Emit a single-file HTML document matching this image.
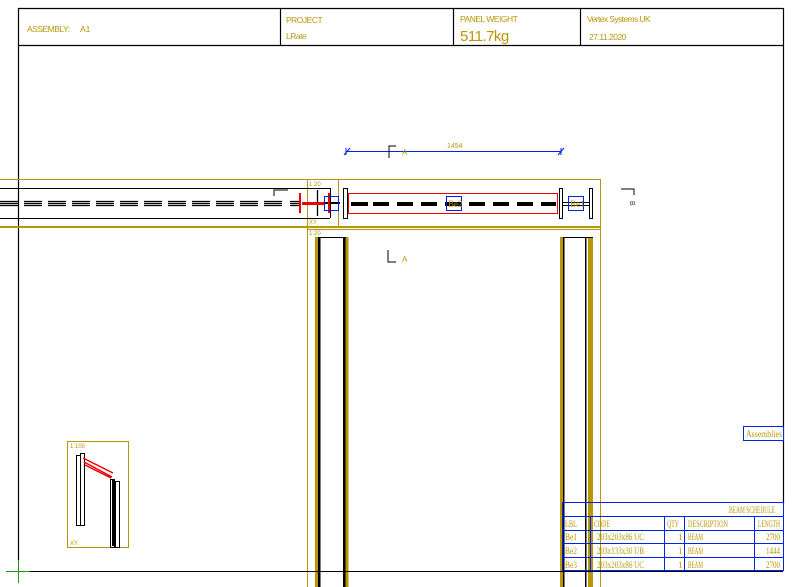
<!DOCTYPE html>
<html><head><meta charset="utf-8"><style>
html,body{margin:0;padding:0;background:#fff;width:799px;height:587px;overflow:hidden}
svg{display:block}
.t{font-family:"Liberation Sans",sans-serif;fill:#b8960a}
.m{font-family:"Liberation Serif",serif;fill:#b8960a;font-size:9px}
</style></head><body>
<svg width="799" height="587" viewBox="0 0 799 587" xmlns="http://www.w3.org/2000/svg">
<g stroke="#000" stroke-width="1.2" fill="none">
<line x1="18" y1="8.5" x2="783" y2="8.5"/>
<line x1="18" y1="45.5" x2="783" y2="45.5"/>
<line x1="18.5" y1="8" x2="18.5" y2="560"/>
<line x1="783.5" y1="8" x2="783.5" y2="503"/>
<line x1="280.5" y1="8" x2="280.5" y2="45"/>
<line x1="453.5" y1="8" x2="453.5" y2="45"/>
<line x1="580.5" y1="8" x2="580.5" y2="45"/>
</g>
<text class="t" x="27" y="32" font-size="8.5" letter-spacing="-0.5">ASSEMBLY:</text>
<text class="t" x="80" y="32" font-size="8.5">A1</text>
<text class="t" x="286" y="23" font-size="8.5" letter-spacing="-0.5">PROJECT</text>
<text class="t" x="286" y="39" font-size="8.5" letter-spacing="-0.5">LRate</text>
<text class="t" x="460" y="22" font-size="8.5" letter-spacing="-0.5">PANEL WEIGHT</text>
<text class="t" x="460" y="41" font-size="15" letter-spacing="-0.5">511.7kg</text>
<text class="t" x="587" y="22" font-size="8.5" letter-spacing="-0.6">Vertex Systems UK</text>
<text class="t" x="589" y="40" font-size="8.5" letter-spacing="-0.5">27.11.2020</text>

<g stroke="#b8960a" stroke-width="1" fill="none">
<line x1="0" y1="179.5" x2="600" y2="179.5"/>
<line x1="0" y1="227" x2="600" y2="227" stroke-width="2"/>
<line x1="307.5" y1="179" x2="307.5" y2="587"/>
<line x1="338.5" y1="179" x2="338.5" y2="227"/>
<line x1="600.5" y1="179" x2="600.5" y2="587"/>
<line x1="307" y1="229.5" x2="600" y2="229.5"/>
</g>
<g stroke="#000" stroke-width="1" fill="none">
<line x1="0" y1="188.5" x2="330" y2="188.5"/>
<line x1="0" y1="218.5" x2="330" y2="218.5"/>
<line x1="330.5" y1="188" x2="330.5" y2="218"/>
<polyline points="274,196 274,190 288,190"/>
</g>
<g stroke="#000" stroke-width="1.3">
<path d="M0 201.5H18M0 203.5H18M0 205.5H18" />
<path d="M24 201.5H42M24 203.5H42M24 205.5H42 M48 201.5H66M48 203.5H66M48 205.5H66 M72 201.5H90M72 203.5H90M72 205.5H90 M96 201.5H114M96 203.5H114M96 205.5H114 M120 201.5H138M120 203.5H138M120 205.5H138 M144 201.5H162M144 203.5H162M144 205.5H162 M168 201.5H186M168 203.5H186M168 205.5H186 M192 201.5H210M192 203.5H210M192 205.5H210 M216 201.5H234M216 203.5H234M216 205.5H234 M240 201.5H258M240 203.5H258M240 205.5H258 M264 201.5H282M264 203.5H282M264 205.5H282 M290 201.5H300M290 203.5H300M290 205.5H300"/>
<line x1="304" y1="203" x2="340" y2="203" stroke-width="2"/>
<line x1="317.5" y1="190" x2="317.5" y2="216"/>
</g>
<g stroke="#e00" stroke-width="2">
<line x1="300" y1="193" x2="300" y2="213"/>
<line x1="329" y1="193" x2="329" y2="213"/>
<line x1="302" y1="203.5" x2="324" y2="203.5" stroke-width="3"/>
</g>
<rect x="324.5" y="196.5" width="14" height="14" fill="none" stroke="#0022ee"/>
<text class="t" x="309" y="186" font-size="6" fill="#d8c070">1:20</text>
<text class="t" x="309" y="224" font-size="6" fill="#d8c070">XY</text>
<text class="t" x="309" y="235" font-size="6" fill="#d8c070">1:20</text>

<rect x="343.5" y="188.5" width="4" height="30" fill="#fff" stroke="#000"/>
<rect x="348.5" y="193.5" width="209" height="20" fill="none" stroke="#e00"/>
<g stroke="#000" stroke-width="4">
<path d="M351 204H368M373 204H389M397 204H413M421 204H437M445 204H461M469 204H485M493 204H509M517 204H533M541 204H556"/>
</g>
<rect x="559.5" y="188.5" width="3" height="30" fill="#fff" stroke="#000"/>
<rect x="589.5" y="188.5" width="3" height="30" fill="#fff" stroke="#000"/>
<path d="M563 202.5H589M563 205.5H589" stroke="#000"/>
<rect x="446.5" y="196.5" width="15" height="14" fill="none" stroke="#0022ee"/>
<rect x="568.5" y="196.5" width="15" height="14" fill="none" stroke="#0022ee"/>
<text class="m" x="448" y="207" font-size="7">Be2</text>
<text class="m" x="570" y="207" font-size="7">Be1</text>

<line x1="346" y1="151.5" x2="561" y2="151.5" stroke="#0022ee"/>
<path d="M344 155L350 148M346 148V155M558 155L564 148M561 148V155" stroke="#0022ee"/>
<text class="t" x="447" y="148" font-size="7">1454</text>
<polyline points="389,158 389,146 396,146" fill="none" stroke="#000"/>
<text x="402" y="155" font-family="Liberation Sans" font-size="8" fill="#b8960a">A</text>
<polyline points="388,250 388,262 396,262" fill="none" stroke="#000"/>
<text x="402" y="262" font-family="Liberation Sans" font-size="8" fill="#b8960a">A</text>
<polyline points="621,189 634,189 634,195" fill="none" stroke="#000"/>
<text x="628" y="203" font-family="Liberation Sans" font-size="7" fill="#336" transform="rotate(90 630 203)">B</text>

<g>
<rect x="315" y="237" width="3" height="350" fill="#b8960a"/>
<rect x="318" y="237" width="2.5" height="350" fill="#000"/>
<rect x="343" y="237" width="2.5" height="350" fill="#000"/>
<rect x="345.5" y="237" width="3" height="350" fill="#b8960a"/>
<line x1="318" y1="237.5" x2="346" y2="237.5" stroke="#000"/>
<rect x="560" y="237" width="3" height="350" fill="#b8960a"/>
<rect x="563" y="237" width="1.5" height="350" fill="#000"/>
<rect x="585" y="237" width="1.5" height="350" fill="#000"/>
<rect x="588" y="237" width="5" height="350" fill="#b8960a"/>
<line x1="563" y1="237.5" x2="593" y2="237.5" stroke="#000"/>
</g>

<line x1="30" y1="571.5" x2="783" y2="571.5" stroke="#000"/>
<path d="M6 571.5H30M18.5 560V583" stroke="#1a9a1a"/>

<rect x="743.5" y="426.5" width="40" height="14" fill="#fff" stroke="#0022ee"/>
<text class="m" x="746" y="437" font-size="8" textLength="36" lengthAdjust="spacingAndGlyphs">Assemblies</text>

<g fill="none" stroke="#0022ee">
<rect x="562.5" y="502.5" width="221" height="68"/>
<line x1="562" y1="516.5" x2="784" y2="516.5"/>
<line x1="562" y1="530.5" x2="784" y2="530.5"/>
<line x1="562" y1="543.5" x2="784" y2="543.5"/>
<line x1="562" y1="557.5" x2="784" y2="557.5"/>
<line x1="590.5" y1="516" x2="590.5" y2="571"/>
<line x1="664.5" y1="516" x2="664.5" y2="571"/>
<line x1="684.5" y1="516" x2="684.5" y2="571"/>
<line x1="754.5" y1="516" x2="754.5" y2="571"/>
</g>
<g>
<text x="729" y="513" class="m" textLength="46" lengthAdjust="spacingAndGlyphs">BEAM SCHEDULE</text>
<text x="565" y="527" class="m" textLength="12" lengthAdjust="spacingAndGlyphs">LBL</text>
<text x="594" y="527" class="m" textLength="16" lengthAdjust="spacingAndGlyphs">CODE</text>
<text x="667" y="527" class="m" textLength="12" lengthAdjust="spacingAndGlyphs">QTY</text>
<text x="688" y="527" class="m" textLength="40" lengthAdjust="spacingAndGlyphs">DESCRIPTION</text>
<text x="758" y="527" class="m" textLength="22" lengthAdjust="spacingAndGlyphs">LENGTH</text>
<text x="565" y="540" class="m" textLength="12" lengthAdjust="spacingAndGlyphs">Be1</text>
<text x="597" y="540" class="m" textLength="47" lengthAdjust="spacingAndGlyphs">203x203x86 UC</text>
<text x="678" y="540" class="m">1</text>
<text x="688" y="540" class="m" textLength="15" lengthAdjust="spacingAndGlyphs">BEAM</text>
<text x="766" y="540" class="m" textLength="14" lengthAdjust="spacingAndGlyphs">2700</text>
<text x="565" y="554" class="m" textLength="12" lengthAdjust="spacingAndGlyphs">Be2</text>
<text x="597" y="554" class="m" textLength="47" lengthAdjust="spacingAndGlyphs">203x133x30 UB</text>
<text x="678" y="554" class="m">1</text>
<text x="688" y="554" class="m" textLength="15" lengthAdjust="spacingAndGlyphs">BEAM</text>
<text x="766" y="554" class="m" textLength="14" lengthAdjust="spacingAndGlyphs">1444</text>
<text x="565" y="568" class="m" textLength="12" lengthAdjust="spacingAndGlyphs">Be3</text>
<text x="597" y="568" class="m" textLength="47" lengthAdjust="spacingAndGlyphs">203x203x86 UC</text>
<text x="678" y="568" class="m">1</text>
<text x="688" y="568" class="m" textLength="15" lengthAdjust="spacingAndGlyphs">BEAM</text>
<text x="766" y="568" class="m" textLength="14" lengthAdjust="spacingAndGlyphs">2700</text>
</g>

<rect x="67.5" y="441.5" width="61" height="106" fill="#fff" stroke="#b8960a"/>
<text class="t" x="70" y="448" font-size="6" fill="#d8c070">1:100</text>
<text class="t" x="70" y="545" font-size="6">XY</text>
<g fill="#fff" stroke="#000" stroke-width="1">
<rect x="76.5" y="455.5" width="4" height="70"/>
<rect x="80.5" y="453.5" width="4" height="72"/>
<rect x="110.5" y="479.5" width="4" height="68"/>
<rect x="115.5" y="481.5" width="4" height="66"/>
</g>
<rect x="112" y="480" width="3" height="66" fill="#000"/>
<path d="M83 458L113 473M84 462L112 477M85 465L111 478" stroke="#e00" stroke-width="1.5"/>
</svg>
</body></html>
